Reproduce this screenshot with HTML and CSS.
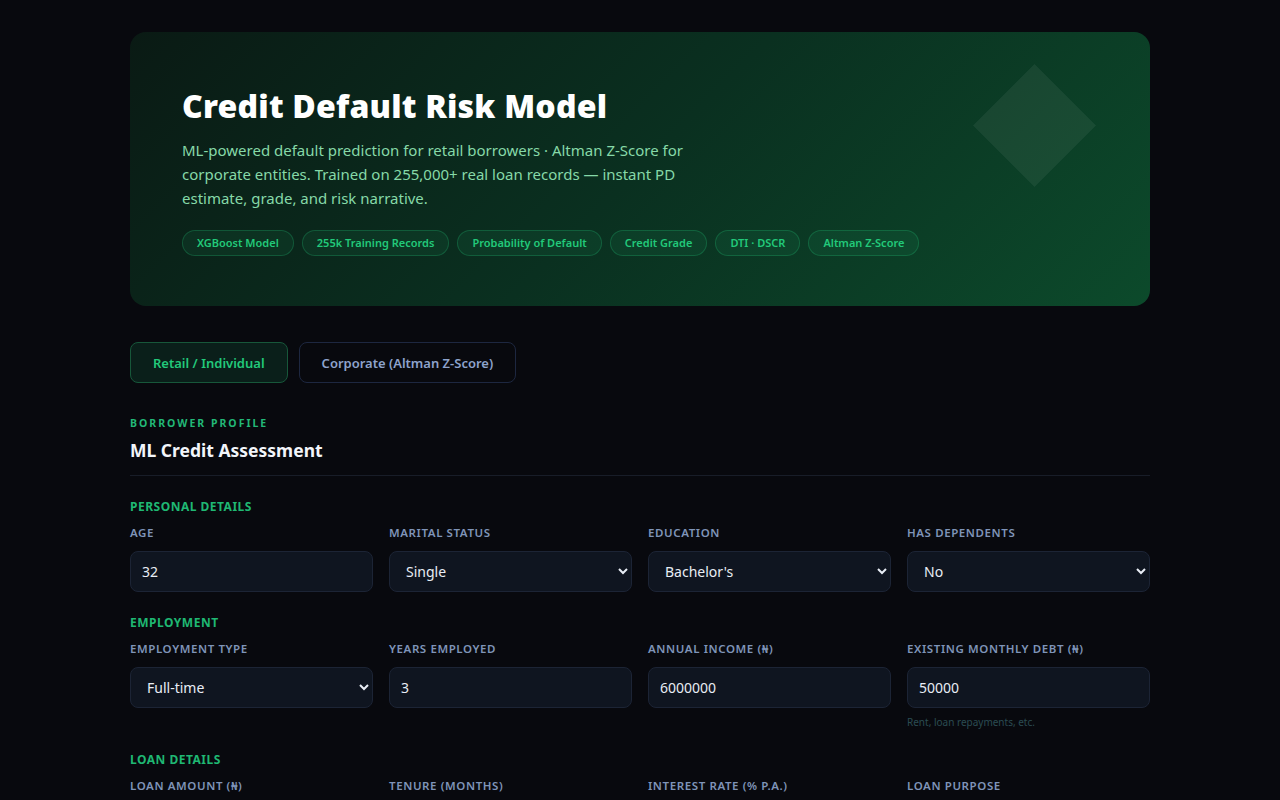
FILE: index.html
```html
<!DOCTYPE html>
<html lang="en">
<head>
  <meta charset="UTF-8">
  <title>Credit Default Risk Model</title>
  <link rel="stylesheet" href="styles.css">
</head>
<body>
  <div class="page">
    <header class="hero">
      <div class="hero-mark"></div>
      <h1>Credit Default Risk Model</h1>
      <p class="hero-sub">ML-powered default prediction for retail borrowers · Altman Z-Score for corporate entities. Trained on 255,000+ real loan records — instant PD estimate, grade, and risk narrative.</p>
      <div class="tags">
        <span class="tag">XGBoost Model</span>
        <span class="tag">255k Training Records</span>
        <span class="tag">Probability of Default</span>
        <span class="tag">Credit Grade</span>
        <span class="tag">DTI · DSCR</span>
        <span class="tag">Altman Z-Score</span>
      </div>
    </header>

    <div class="tabs">
      <button class="tab active">Retail / Individual</button>
      <button class="tab">Corporate (Altman Z-Score)</button>
    </div>

    <div class="panel-head">
      <div class="eyebrow">Borrower Profile</div>
      <h2>ML Credit Assessment</h2>
    </div>

    <div class="section-title">Personal Details</div>
    <div class="grid">
      <div class="field">
        <label>Age</label>
        <input type="number" value="32">
      </div>
      <div class="field">
        <label>Marital Status</label>
        <select><option>Single</option><option>Married</option><option>Divorced</option></select>
      </div>
      <div class="field">
        <label>Education</label>
        <select><option>Bachelor's</option><option>High School</option><option>Master's</option><option>PhD</option></select>
      </div>
      <div class="field">
        <label>Has Dependents</label>
        <select><option>No</option><option>Yes</option></select>
      </div>
    </div>

    <div class="section-title">Employment</div>
    <div class="grid">
      <div class="field">
        <label>Employment Type</label>
        <select><option>Full-time</option><option>Part-time</option><option>Self-employed</option><option>Unemployed</option></select>
      </div>
      <div class="field">
        <label>Years Employed</label>
        <input type="number" value="3">
      </div>
      <div class="field">
        <label>Annual Income (₦)</label>
        <input type="number" value="6000000">
      </div>
      <div class="field">
        <label>Existing Monthly Debt (₦)</label>
        <input type="number" value="50000">
        <span class="hint">Rent, loan repayments, etc.</span>
      </div>
    </div>

    <div class="section-title">Loan Details</div>
    <div class="grid">
      <div class="field">
        <label>Loan Amount (₦)</label>
        <input type="number" value="2000000">
      </div>
      <div class="field">
        <label>Tenure (Months)</label>
        <input type="number" value="24">
      </div>
      <div class="field">
        <label>Interest Rate (% p.a.)</label>
        <input type="number" value="18">
      </div>
      <div class="field">
        <label>Loan Purpose</label>
        <select><option>Business</option><option>Education</option><option>Home</option></select>
      </div>
    </div>
  </div>
</body>
</html>
```

FILE: styles.css
```css
body {
  margin: 0;
  background-color: #08090e;
  color: #e6edf5;
  font-family: "Noto Sans", "Open Sans", sans-serif;
}
.page {
  width: 1020px;
  margin: 32px auto 60px;
}

/* hero */
.hero {
  position: relative;
  overflow: hidden;
  padding: 55px 52px 50px;
  border-radius: 16px;
  background: linear-gradient(135deg, #0a1a14 0%, #0a3020 50%, #0c4a2b 100%);
}
.hero-mark {
  position: absolute;
  top: 50px;
  right: 72px;
  width: 87px;
  height: 87px;
  background: rgba(255, 255, 255, 0.06);
  transform: rotate(45deg);
}
.hero h1 {
  margin: 0;
  font-size: 32px;
  font-weight: 900;
  line-height: 1.2;
  letter-spacing: 0.2px;
  color: #ffffff;
}
.hero-sub {
  margin: 13px 0 0;
  max-width: 520px;
  font-size: 15px;
  line-height: 24px;
  color: #86d9a8;
}
.tags {
  display: flex;
  flex-wrap: wrap;
  gap: 8px;
  margin-top: 20px;
}
.tag {
  padding: 0 14px;
  height: 26px;
  line-height: 24px;
  border-radius: 13px;
  font-size: 11px;
  font-weight: 600;
  color: #22c97a;
  background: rgba(34, 201, 122, 0.08);
  border: 1px solid rgba(34, 201, 122, 0.25);
  box-sizing: border-box;
}

/* tabs */
.tabs {
  display: flex;
  gap: 11px;
  margin-top: 36px;
}
.tab {
  height: 41px;
  padding: 0 22px;
  border-radius: 8px;
  font-family: inherit;
  font-size: 13px;
  font-weight: 600;
  background: transparent;
  border: 1px solid #1d2740;
  color: #8ea3cc;
  cursor: pointer;
}
.tab.active {
  background: #0a1f1a;
  border-color: #17573a;
  color: #22c97a;
}

/* panel */
.panel-head {
  margin-top: 33px;
  padding-bottom: 13px;
  border-bottom: 1px solid #181d28;
}
.eyebrow {
  font-size: 10.5px;
  font-weight: 700;
  letter-spacing: 2px;
  text-transform: uppercase;
  color: #22b877;
}
.panel-head h2 {
  margin: 8px 0 0;
  font-size: 17.5px;
  font-weight: 700;
  color: #f2f5fa;
}

.section-title {
  margin: 22px 0 10px;
  font-size: 12px;
  font-weight: 700;
  letter-spacing: 0.5px;
  text-transform: uppercase;
  color: #1fb873;
}
.grid {
  display: grid;
  grid-template-columns: repeat(4, 1fr);
  gap: 16px;
}
.field {
  display: flex;
  flex-direction: column;
}
.field label {
  margin-bottom: 11px;
  font-size: 11.5px;
  font-weight: 600;
  letter-spacing: 0.6px;
  text-transform: uppercase;
  color: #7f94b8;
}
.field input,
.field select {
  box-sizing: border-box;
  height: 41px;
  padding: 0 11px;
  border-radius: 8px;
  border: 1px solid #1c2435;
  background: #0f1520;
  color: #e8edf5;
  font-family: inherit;
  font-size: 14px;
  outline: none;
}
.field select {
  padding-left: 12px;
}
.field input::-webkit-inner-spin-button,
.field input::-webkit-outer-spin-button {
  -webkit-appearance: none;
  margin: 0;
}
.hint {
  margin-top: 7px;
  font-size: 10px;
  color: #2b4c52;
}
```
